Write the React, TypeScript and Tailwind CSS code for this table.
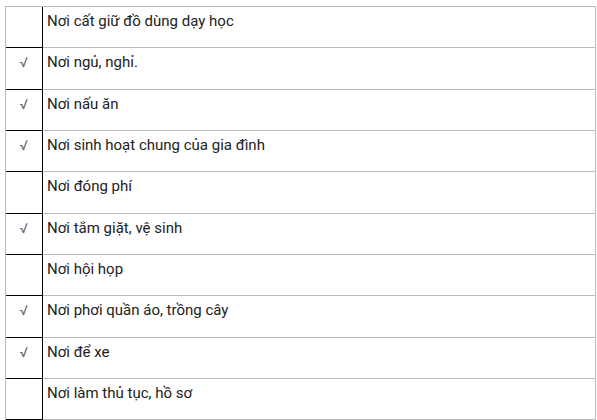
const rows: { text: string; check: boolean; h: string }[] = [
  { text: "Nơi cất giữ đồ dùng dạy học", check: false, h: "h-[41px]" },
  { text: "Nơi ngủ, nghỉ.", check: true, h: "h-[42px]" },
  { text: "Nơi nấu ăn", check: true, h: "h-[41px]" },
  { text: "Nơi sinh hoạt chung của gia đình", check: true, h: "h-[41px]" },
  { text: "Nơi đóng phí", check: false, h: "h-[42px]" },
  { text: "Nơi tắm giặt, vệ sinh", check: true, h: "h-[41px]" },
  { text: "Nơi hội họp", check: false, h: "h-[41px]" },
  { text: "Nơi phơi quần áo, trồng cây", check: true, h: "h-[42px]" },
  { text: "Nơi để xe", check: true, h: "h-[41px]" },
  { text: "Nơi làm thủ tục, hồ sơ", check: false, h: "h-[41px]" },
];

export default function App() {
  return (
    <div
      className="w-[597px] h-[420px] bg-white overflow-hidden pl-[5px] pt-[6px] text-[15px] text-[#222]"
      style={{ fontFamily: "Roboto, 'Noto Sans', sans-serif" }}
    >
      <div className="w-[591px] border-t border-l border-r border-[#bbbbbb]">
        {rows.map((r, i) => (
          <div key={i} className={`flex ${r.h}`}>
            <div className="w-[37px] shrink-0 border-r border-b border-black text-center pt-[4px] leading-[20px] text-[#666] text-[14px]">
              {r.check ? "√" : ""}
            </div>
            <div className="flex-1 border-b border-[#bbbbbb] pl-[4px] pt-[4px] leading-[20px]">
              {r.text}
            </div>
          </div>
        ))}
      </div>
    </div>
  );
}
